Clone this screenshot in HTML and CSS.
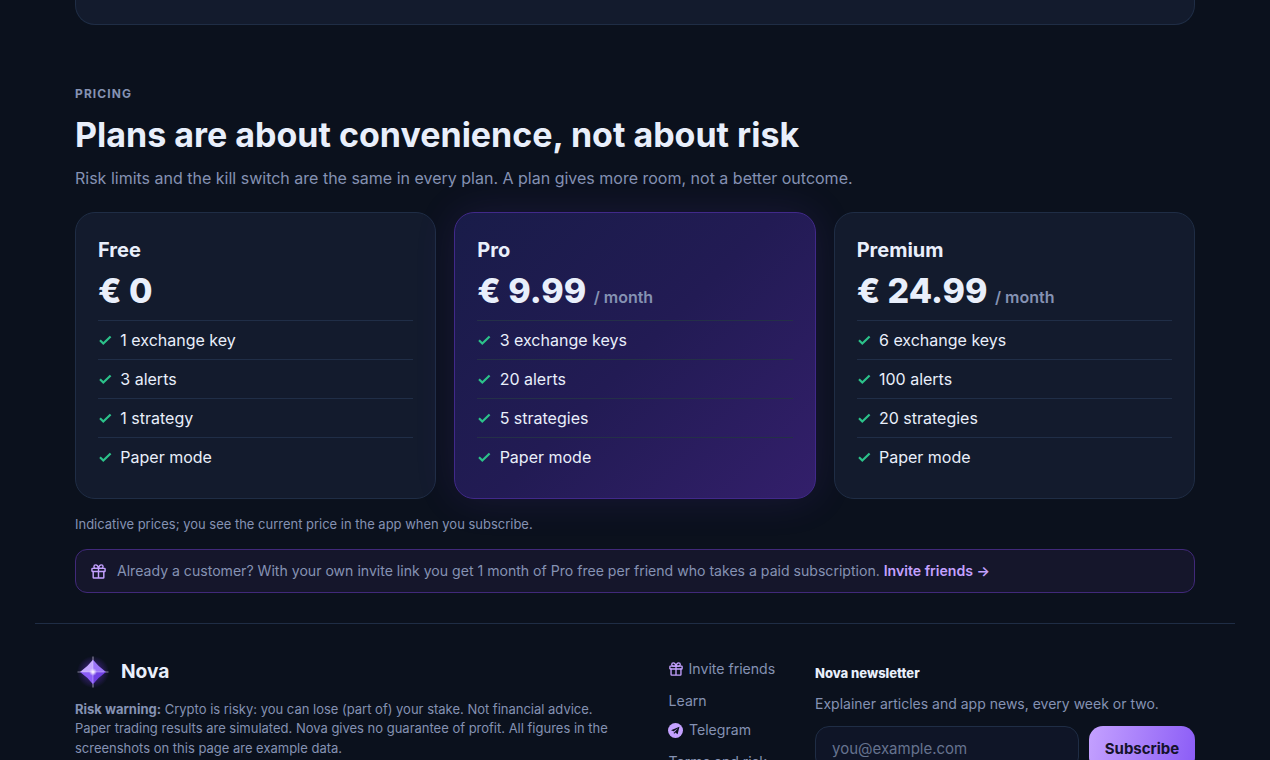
FILE: index.html
```html
<!DOCTYPE html>
<html lang="en">
<head>
<meta charset="utf-8">
<title>Nova – Pricing</title>
<link rel="stylesheet" href="styles.css">
</head>
<body>
<svg class="defs" width="0" height="0" aria-hidden="true">
  <symbol id="check" viewBox="0 0 14 14"><path d="M2 7.300 5.300 10.500 12.600 3.500" fill="none" stroke="currentColor" stroke-width="2.200"/></symbol>
  <symbol id="gift" viewBox="0 0 24 24"><g fill="none" stroke="currentColor" stroke-width="2.300" stroke-linecap="round" stroke-linejoin="round"><rect x="1.500" y="7" width="21" height="5" rx="1"/><path d="M3.500 12v9.500a1 1 0 0 0 1 1h15a1 1 0 0 0 1-1V12M12 7v15.500M12 7H7.500a2.800 2.800 0 1 1 0-5.600C11 1.400 12 7 12 7zM12 7h4.500a2.800 2.800 0 1 0 0-5.600C13 1.400 12 7 12 7z"/></g></symbol>
</svg>
<div class="container">
  <div class="panel"></div>
  <section class="pricing">
    <p class="eyebrow">PRICING</p>
    <h2 class="heading">Plans are about convenience, not about risk</h2>
    <p class="lead">Risk limits and the kill switch are the same in every plan. A plan gives more room, not a better outcome.</p>
    <div class="plans">
      <article class="plan">
        <h3>Free</h3>
        <p class="price">€ 0</p>
        <ul>
          <li><svg class="check"><use href="#check"/></svg>1 exchange key</li>
          <li><svg class="check"><use href="#check"/></svg>3 alerts</li>
          <li><svg class="check"><use href="#check"/></svg>1 strategy</li>
          <li><svg class="check"><use href="#check"/></svg>Paper mode</li>
        </ul>
      </article>
      <article class="plan featured">
        <h3>Pro</h3>
        <p class="price">€ 9.99 <small>/ month</small></p>
        <ul>
          <li><svg class="check"><use href="#check"/></svg>3 exchange keys</li>
          <li><svg class="check"><use href="#check"/></svg>20 alerts</li>
          <li><svg class="check"><use href="#check"/></svg>5 strategies</li>
          <li><svg class="check"><use href="#check"/></svg>Paper mode</li>
        </ul>
      </article>
      <article class="plan">
        <h3>Premium</h3>
        <p class="price">€ 24.99 <small>/ month</small></p>
        <ul>
          <li><svg class="check"><use href="#check"/></svg>6 exchange keys</li>
          <li><svg class="check"><use href="#check"/></svg>100 alerts</li>
          <li><svg class="check"><use href="#check"/></svg>20 strategies</li>
          <li><svg class="check"><use href="#check"/></svg>Paper mode</li>
        </ul>
      </article>
    </div>
    <p class="note">Indicative prices; you see the current price in the app when you subscribe.</p>
    <div class="invite">
      <svg class="gift"><use href="#gift"/></svg>
      <p>Already a customer? With your own invite link you get 1 month of Pro free per friend who takes a paid subscription. <a href="#">Invite friends →</a></p>
    </div>
  </section>
  <footer class="footer">
    <div class="about">
      <div class="brand">
        <svg class="logo" viewBox="0 0 36 36">
          <defs>
            <radialGradient id="halo"><stop offset="0" stop-color="#7c3aed" stop-opacity=".65"/><stop offset=".55" stop-color="#6d35e0" stop-opacity=".3"/><stop offset="1" stop-color="#6d35e0" stop-opacity="0"/></radialGradient>
            <radialGradient id="core"><stop offset="0" stop-color="#fff"/><stop offset=".35" stop-color="#f3e8ff" stop-opacity=".8"/><stop offset="1" stop-color="#ddd6fe" stop-opacity="0"/></radialGradient>
          </defs>
          <circle cx="18" cy="18" r="16" fill="url(#halo)"/>
          <path d="M18 2.500v31M2.500 18h31" stroke="#a9a3bd" stroke-width="1.200" opacity=".75"/>
          <path d="M18 5.800Q23.500 12.800 31 18H18z" fill="#9b74f8"/>
          <path d="M18 5.800Q12.500 12.800 5 18H18z" fill="#c5a8ff"/>
          <path d="M5 18Q12.500 23.200 18 30.200V18z" fill="#8b5cf6"/>
          <path d="M31 18Q23.500 23.200 18 30.200V18z" fill="#7040e3"/>
          <path d="M18 7v22M7 18h22" stroke="#ddd6fe" stroke-width=".7" opacity=".6"/>
          <circle cx="18" cy="18" r="4" fill="url(#core)"/>
        </svg>
        <span>Nova</span>
      </div>
      <p class="warning"><strong>Risk warning:</strong> Crypto is risky: you can lose (part of) your stake. Not financial advice. Paper trading results are simulated. Nova gives no guarantee of profit. All figures in the screenshots on this page are example data.</p>
    </div>
    <nav class="links">
      <a href="#"><svg class="gift small"><use href="#gift"/></svg>Invite friends</a>
      <a href="#" class="plain">Learn</a>
      <a href="#"><svg class="telegram" viewBox="0 0 24 24"><circle cx="12" cy="12" r="12" fill="#c4a1ff"/><path d="M18.300 6 4.800 11.700l4.100 1.600 7.300-5.100-5.700 6.200 4.900 3.500z" fill="#0b111d"/><path d="m9.300 13.700.2 3.800 2-2z" fill="#0b111d"/></svg>Telegram</a>
      <a href="#" class="plain">Terms and risk</a>
    </nav>
    <form class="newsletter">
      <h4>Nova newsletter</h4>
      <p>Explainer articles and app news, every week or two.</p>
      <div class="signup">
        <input type="email" placeholder="you@example.com">
        <button type="button">Subscribe</button>
      </div>
    </form>
  </footer>
</div>
</body>
</html>
```
FILE: styles.css
```css
* { box-sizing: border-box; }
html { background: #0b111d; }
body {
  margin: 0;
  height: 760px;
  overflow: hidden;
  background: #0b111d;
  color: #e9effb;
  font: 16px/24px Inter, sans-serif;
}
h2, h3, h4, p, ul { margin: 0; padding: 0; }
a { color: inherit; text-decoration: none; }
svg { flex: none; }
.defs { display: block; }

.container { width: 1200px; margin: 0 auto; }
.panel {
  height: 25px;
  margin: 0 40px;
  background: #131b2d;
  border: 1px solid #1f2d45;
  border-top: 0;
  border-radius: 0 0 20px 20px;
}

.pricing { padding: 60px 40px 30px; }
.eyebrow { font-size: 12px; line-height: 18px; font-weight: 700; letter-spacing: 1.1px; color: #8592b3; }
.heading { margin-top: 11px; font-size: 34px; line-height: 42px; font-weight: 700; }
.lead { margin-top: 10px; color: #8592b3; }

.plans { display: grid; grid-template-columns: repeat(3, 1fr); gap: 18px; margin-top: 22px; }
.plan {
  height: 287px;
  padding: 22px;
  border: 1px solid #1f2d45;
  border-radius: 20px;
  background: #131b2d;
}
.plan.featured {
  border-color: #41298a;
  background: linear-gradient(135deg, #191c49, #221b54 50%, #331f6b);
  box-shadow: 0 0 40px rgba(124, 58, 237, 0.13);
}
.plan h3 { font-size: 20px; line-height: 30px; font-weight: 700; }
.price { height: 43px; margin-top: 4px; margin-bottom: 8px; font-size: 34px; line-height: 43px; font-weight: 800; }
.price small { font-size: 16px; line-height: 1; font-weight: 600; color: #8592b3; }
.plan ul { list-style: none; }
.plan li { display: flex; align-items: center; gap: 8.3px; padding: 7px 0; border-top: 1px solid #202e47; }
.featured li { border-color: #243048; }
.check { width: 14px; height: 14px; color: #2cc28a; }

.note { margin-top: 15px; font-size: 12.98px; line-height: 20px; color: #8592b3; }
.invite {
  display: flex;
  align-items: center;
  gap: 11px;
  height: 44px;
  margin-top: 15px;
  padding: 0 15px;
  border: 1px solid #41297a;
  border-radius: 12px;
  background: #15162b;
  font-size: 14.08px;
  color: #8592b3;
}
.invite a { color: #c4a1ff; font-weight: 600; }
.gift { width: 15px; height: 15px; color: #c4a1ff; }
.gift.small { width: 14px; height: 14px; }

.footer {
  display: flex;
  gap: 40px;
  padding: 30px 40px 0;
  border-top: 1px solid #1f2d45;
  color: #8592b3;
}
.about { flex: none; width: 553px; }
.brand { display: flex; align-items: center; gap: 10px; height: 36px; font-size: 19.2px; font-weight: 750; color: #e9effb; }
.brand span { padding-bottom: 2px; }
.logo { width: 36px; height: 36px; }
.warning { margin-top: 9.7px; font-size: 12.99px; line-height: 19.5px; }
.links { flex: none; display: flex; flex-direction: column; width: 107px; padding: 4px 0 0 0.6px; font-size: 14.08px; line-height: 22px; }
.links a { display: flex; align-items: center; gap: 6px; margin-top: 7px; white-space: nowrap; }
.links a:first-child { margin-top: 0; }
.links .plain { margin-top: 10px; }
.telegram { width: 15px; height: 15px; margin-left: -0.6px; }
.newsletter { flex: none; width: 380px; padding-top: 9px; }
.newsletter h4 { font-size: 12.99px; line-height: 20px; font-weight: 800; color: #e9effb; }
.newsletter p { margin-top: 10px; font-size: 14px; line-height: 21px; }
.signup { display: flex; gap: 10px; margin-top: 12px; }
.signup input {
  flex: 1;
  min-width: 0;
  height: 45px;
  padding: 0 16px;
  border: 1px solid #1f2d45;
  border-radius: 14px;
  background: #0f1527;
  font: 15px Inter, sans-serif;
}
.signup input::placeholder { color: #66738f; }
.signup button {
  flex: none;
  width: 106px;
  height: 45px;
  padding: 0;
  border: 0;
  border-radius: 14px;
  background: linear-gradient(100deg, #c4a1ff, #8b5cf6);
  color: #15132b;
  font: 700 15px Inter, sans-serif;
}
```
